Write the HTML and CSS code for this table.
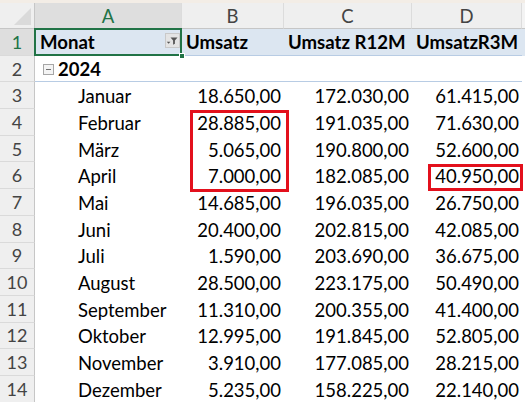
FILE: index.html
```html
<!DOCTYPE html>
<html lang="de">
<head>
<meta charset="utf-8">
<title>Pivot</title>
<link rel="stylesheet" href="styles.css">
</head>
<body>
<div class="strip"></div>
<div class="sheet">
  <div class="corner"><div class="tri"></div></div>
  <div class="ch sel">A</div>
  <div class="ch">B</div>
  <div class="ch">C</div>
  <div class="ch">D</div>
  <div class="ch fill"></div>

  <div class="rh sel">1</div>
  <div class="c hd a1"><span>Monat</span>
    <span class="fbtn"><svg width="15" height="15" viewBox="0 0 15 15"><rect x="0.5" y="0.5" width="14" height="14" fill="#e4e4e4" stroke="#c9c9c9"/><path d="M5.5 4.5h7l-2.6 3v3.2l-1.8 1v-4.2z" fill="#555"/><path d="M1.8 8.8h3.6l-1.8 2z" fill="#555"/></svg></span>
    <span class="selbox"></span><span class="handle"></span>
  </div>
  <div class="c hd">Umsatz</div>
  <div class="c hd">Umsatz R12M</div>
  <div class="c hd">UmsatzR3M</div>
  <div class="c hd fill"></div>

  <div class="rh">2</div>
  <div class="c yr"><span class="minus"></span><b>2024</b></div>
  <div class="c yrl"></div>
  <div class="c yrl"></div>
  <div class="c yrl"></div>
  <div class="c fill"></div>

  <div class="rh">3</div><div class="c m">Januar</div><div class="c n">18.650,00</div><div class="c n">172.030,00</div><div class="c n">61.415,00</div><div class="c fill"></div>
  <div class="rh">4</div><div class="c m">Februar</div><div class="c n">28.885,00</div><div class="c n">191.035,00</div><div class="c n">71.630,00</div><div class="c fill"></div>
  <div class="rh">5</div><div class="c m">März</div><div class="c n">5.065,00</div><div class="c n">190.800,00</div><div class="c n">52.600,00</div><div class="c fill"></div>
  <div class="rh">6</div><div class="c m">April</div><div class="c n">7.000,00</div><div class="c n">182.085,00</div><div class="c n">40.950,00</div><div class="c fill"></div>
  <div class="rh">7</div><div class="c m">Mai</div><div class="c n">14.685,00</div><div class="c n">196.035,00</div><div class="c n">26.750,00</div><div class="c fill"></div>
  <div class="rh">8</div><div class="c m">Juni</div><div class="c n">20.400,00</div><div class="c n">202.815,00</div><div class="c n">42.085,00</div><div class="c fill"></div>
  <div class="rh">9</div><div class="c m">Juli</div><div class="c n">1.590,00</div><div class="c n">203.690,00</div><div class="c n">36.675,00</div><div class="c fill"></div>
  <div class="rh">10</div><div class="c m">August</div><div class="c n">28.500,00</div><div class="c n">223.175,00</div><div class="c n">50.490,00</div><div class="c fill"></div>
  <div class="rh">11</div><div class="c m">September</div><div class="c n">11.310,00</div><div class="c n">200.355,00</div><div class="c n">41.400,00</div><div class="c fill"></div>
  <div class="rh">12</div><div class="c m">Oktober</div><div class="c n">12.995,00</div><div class="c n">191.845,00</div><div class="c n">52.805,00</div><div class="c fill"></div>
  <div class="rh">13</div><div class="c m">November</div><div class="c n">3.910,00</div><div class="c n">177.085,00</div><div class="c n">28.215,00</div><div class="c fill"></div>
  <div class="rh">14</div><div class="c m">Dezember</div><div class="c n">5.235,00</div><div class="c n">158.225,00</div><div class="c n">22.140,00</div><div class="c fill"></div>

  <div class="mark mark1"></div>
  <div class="mark mark2"></div>
</div>
</body>
</html>
```
FILE: styles.css
```css
* { box-sizing: border-box; }
html, body { margin: 0; padding: 0; background: #fff; overflow: hidden; }
body {
  font-family: Lato, "Liberation Sans", sans-serif;
  font-size: 18.5px;
  color: #000;
}
.strip { height: 3px; background: #f3ede6; }
.sheet {
  position: relative;
  display: grid;
  grid-template-columns: 35px 147px 102px 128px 110px 1fr;
  grid-template-rows: 26px repeat(14, 26.7px);
}
.corner {
  position: relative;
  background: #efefef;
  border-right: 1px solid #c6c6c6;
  border-bottom: 1px solid #c6c6c6;
}
.tri {
  position: absolute;
  right: 3px; bottom: 3px;
  width: 0; height: 0;
  border-left: 17px solid transparent;
  border-bottom: 17px solid #dadada;
}
.ch {
  background: #efefef;
  border-right: 1px solid #dcdcdc;
  border-bottom: 1px solid #c6c6c6;
  color: #444;
  display: flex;
  align-items: center;
  justify-content: center;
  font-size: 18.5px;
  padding-top: 1px;
}
.ch.sel { background: #dedede; color: #217346; border-bottom: 1px solid #217346; }
.ch.fill { background: #f3f3f3; border-right: none; }
.rh {
  background: #efefef;
  border-right: 1px solid #c6c6c6;
  border-bottom: 1px solid #dadada;
  color: #444;
  display: flex;
  align-items: center;
  justify-content: center;
  font-size: 18px;
}
.rh.sel { background: #dedede; color: #217346; border-right: 1px solid #217346; }
.c {
  display: flex;
  align-items: center;
  white-space: nowrap;
  padding: 1px 4px 0 4px;
}
.hd {
  background: #dce6f1;
  border-bottom: 1px solid #b8cce4;
  font-weight: 700;
  font-size: 18.6px;
}
.a1 { position: relative; padding-left: 5px; padding-right: 2px; }
.fbtn { margin-left: auto; display: flex; margin-top: -4px; }
.selbox {
  position: absolute;
  left: -1px; top: -1px; right: 0; bottom: -1px;
  border: 2px solid #217346;
}
.handle {
  position: absolute;
  right: -3px; bottom: -4px;
  width: 6px; height: 6px;
  background: #217346;
  border: 1px solid #fff;
}
.yr { border-bottom: 1px solid #b8cce4; padding-left: 8px; }
.yrl { border-bottom: 1px solid #b8cce4; }
.fill.c { border-bottom: none; }
.minus {
  width: 11px; height: 11px;
  border: 1px solid #a6a6a6;
  background: #f4f4f4;
  position: relative;
  margin-right: 4px;
  margin-top: 1px;
}
.minus::after {
  content: "";
  position: absolute;
  left: 2px; right: 2px; top: 4px;
  height: 1px;
  background: #707070;
}
.m { padding-left: 43px; }
.n { justify-content: flex-end; padding-right: 3px; }
.mark {
  position: absolute;
  border: 3px solid #e3101c;
}
.mark1 { left: 190px; top: 107px; width: 99px; height: 82px; }
.mark2 { left: 428px; top: 161px; width: 95px; height: 27px; }
```
